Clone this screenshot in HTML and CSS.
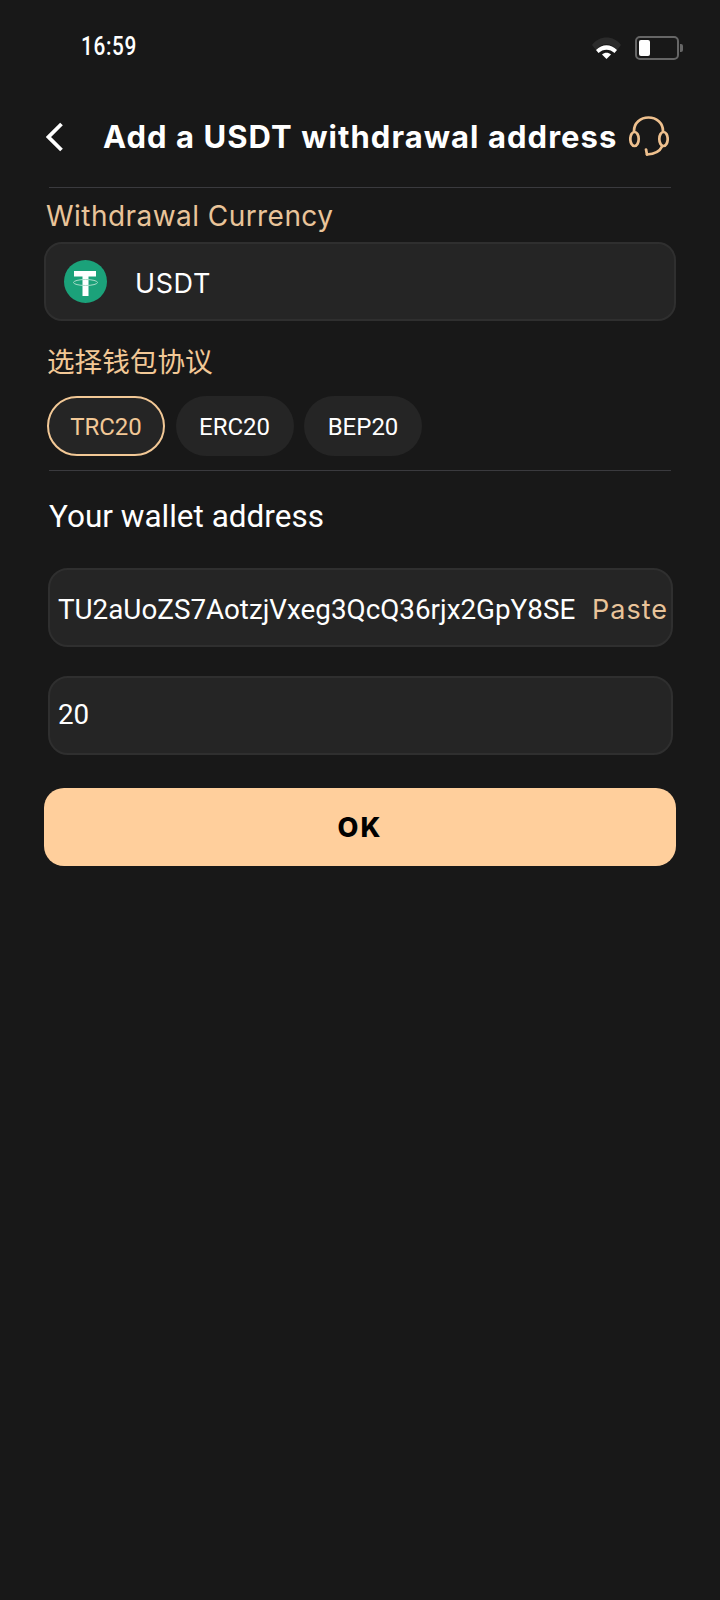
FILE: index.html
```html
<!DOCTYPE html>
<html lang="en">
<head>
  <meta charset="UTF-8" />
  <meta name="viewport" content="width=device-width, initial-scale=1.0"/>
  <title>Add a USDT withdrawal address</title>
  <link rel="stylesheet" href="styles.css">
</head>
<body>
  <div class="status">
    <span class="time">16:59</span>
    <div class="status-icons">
      <svg class="wifi" width="32" height="24" viewBox="0 0 32 24">
        <path d="M1 9C8 -1 23 -1 30 9L26 14C20 6 11 6 5 14Z" fill="#2b2b2b"/>
        <path d="M5 14C11 7.500 20 7.500 26 14L23.500 17C19 12.500 12 12.500 7.500 17Z" fill="#fff"/>
        <path d="M11 18.500C13.500 16 17.500 16 20 18.500L15.500 23Z" fill="#fff"/>
      </svg>
      <div class="battery"><div class="battery-level"></div></div>
      <div class="battery-tip"></div>
    </div>
  </div>

  <div class="nav">
    <svg class="back" width="18" height="30" viewBox="0 0 18 30">
      <path d="M15.500 2L2.500 15L15.500 28" fill="none" stroke="#fff" stroke-width="3.800"/>
    </svg>
    <h1>Add a USDT withdrawal address</h1>
    <svg class="support" width="40" height="42" viewBox="0 0 40 42" fill="none" stroke="#eec08e" stroke-width="2.700" stroke-linecap="round">
      <path d="M5 15C5 7 11.500 1.500 19.500 1.500S34 7 34 15"/>
      <ellipse cx="5.500" cy="23" rx="4.200" ry="7"/>
      <ellipse cx="34.500" cy="23" rx="4.200" ry="7"/>
      <path d="M33 30.500C31 35 26 38 18 38.500"/>
      <path d="M17 33.500L18 38.500"/>
    </svg>
  </div>
  <div class="line"></div>

  <div class="content">
    <div class="label-en">Withdrawal Currency</div>
    <div class="coin-box">
      <svg class="coin" width="43" height="43" viewBox="0 0 43 43">
        <circle cx="21.500" cy="21.500" r="21.500" fill="#1ba27a"/>
        <path d="M10 11H32V16.500H24.500V36H18.500V16.500H10Z" fill="#fff"/>
        <ellipse cx="21.500" cy="22.500" rx="12" ry="3" fill="none" stroke="#a8dcc9" stroke-width="1"/>
      </svg>
      <span class="coin-name">USDT</span>
    </div>

    <div class="label-cn">选择钱包协议</div>
    <div class="pills">
      <div class="pill active">TRC20</div>
      <div class="pill">ERC20</div>
      <div class="pill">BEP20</div>
    </div>
    <div class="line line-2"></div>

    <div class="wallet-title">Your wallet address</div>
    <div class="field">
      <span>TU2aUoZS7AotzjVxeg3QcQ36rjx2GpY8SE</span>
      <span class="paste">Paste</span>
    </div>
    <div class="field field-2">
      <span>20</span>
    </div>
    <button class="ok" type="button">OK</button>
  </div>
</body>
</html>
```

FILE: styles.css
```css
html, body {
  margin: 0;
  padding: 0;
}
body {
  width: 720px;
  height: 1600px;
  background-color: #181818;
  color: #fff;
  font-family: 'Roboto', 'Noto Sans CJK SC', sans-serif;
  overflow: hidden;
}
.status {
  height: 86px;
  display: flex;
  justify-content: space-between;
  align-items: flex-start;
  padding: 0 37px 0 81px;
  box-sizing: border-box;
}
.time {
  margin-top: 31px;
  font-size: 26px;
  font-weight: 500;
  line-height: 30px;
  letter-spacing: 0.8px;
  transform: scaleX(0.8);
  transform-origin: left center;
}
.status-icons {
  display: flex;
  align-items: center;
  margin-top: 36px;
}
.wifi {
  margin-right: 12px;
}
.battery {
  width: 44px;
  height: 24px;
  box-sizing: border-box;
  border: 2px solid #666;
  border-radius: 5px;
  padding: 2px;
}
.battery-level {
  width: 11px;
  height: 16px;
  background-color: #fff;
  border-radius: 2px;
}
.battery-tip {
  width: 3px;
  height: 8px;
  background-color: #666;
  border-radius: 0 2px 2px 0;
  margin-left: 1px;
}
.nav {
  height: 101px;
  display: flex;
  align-items: center;
  padding: 0 51px 0 46px;
  box-sizing: border-box;
}
.back {
  flex-shrink: 0;
}
.nav h1 {
  margin: 0 0 0 39px;
  font-family: 'Inter', sans-serif;
  font-size: 31px;
  font-weight: 700;
  letter-spacing: 1.05px;
  white-space: nowrap;
  flex: 1;
}
.support {
  flex-shrink: 0;
}
.line {
  height: 1px;
  background-color: #3a3a3e;
  margin: 0 49px;
}
.content {
  padding: 0 44px;
}
.line-2 {
  margin: 14px 5px 0;
}
.label-en {
  margin: 11px 0 0 2px;
  font-family: 'Inter', sans-serif;
  font-size: 28px;
  line-height: 34px;
  letter-spacing: 0.45px;
  color: #e9c49a;
}
.coin-box {
  margin-top: 9px;
  height: 79px;
  box-sizing: border-box;
  background-color: #252525;
  border: 2px solid #2f2f2f;
  border-radius: 18px;
  display: flex;
  align-items: center;
  padding-left: 18px;
}
.coin-name {
  margin: 3px 0 0 28px;
  font-family: 'Inter', sans-serif;
  font-size: 27px;
  letter-spacing: 0.6px;
  color: #fff;
}
.label-cn {
  margin: 25px 0 0 3px;
  font-size: 27.600px;
  line-height: 34px;
  color: #f2c896;
}
.pills {
  display: flex;
  gap: 10.500px;
  margin: 16px 0 0 3px;
}
.pill {
  width: 118px;
  height: 60px;
  box-sizing: border-box;
  background-color: #252525;
  border-radius: 30px;
  display: flex;
  align-items: center;
  justify-content: center;
  padding-top: 2px;
  font-size: 24px;
  color: #fff;
}
.pill.active {
  border: 2px solid #f2c896;
  color: #f2c896;
}
.wallet-title {
  margin: 27px 0 0 5px;
  font-size: 31.500px;
  line-height: 38px;
  color: #fff;
}
.field {
  margin: 32px 3px 0 4px;
  height: 79px;
  box-sizing: border-box;
  background-color: #252525;
  border: 2px solid #2f2f2f;
  border-radius: 20px;
  display: flex;
  align-items: center;
  justify-content: space-between;
  padding: 3px 3px 0 8px;
  font-size: 27.800px;
  white-space: nowrap;
}
.field-2 {
  margin-top: 29px;
  padding: 0 3px 2px 8px;
}
.paste {
  font-family: 'Inter', sans-serif;
  font-size: 27px;
  letter-spacing: 1px;
  color: #e9c49a;
}
.ok {
  display: block;
  width: 100%;
  height: 78px;
  margin-top: 33px;
  background-color: #ffcf9c;
  color: #000;
  border: none;
  border-radius: 20px;
  font-family: 'Inter', sans-serif;
  font-size: 27px;
  font-weight: 800;
  letter-spacing: 2px;
}
```
